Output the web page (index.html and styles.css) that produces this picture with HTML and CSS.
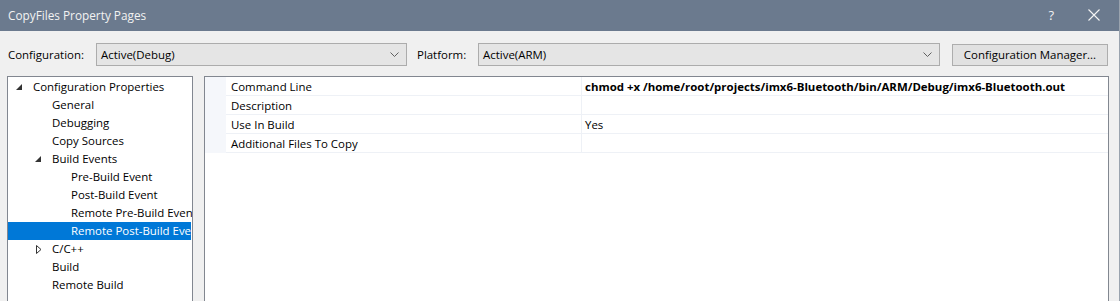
FILE: index.html
```html
<!DOCTYPE html>
<html>
<head>
<meta charset="utf-8">
<link rel="stylesheet" href="styles.css">
</head>
<body>
<div class="window">
  <div class="titlebar">
    <span class="title">CopyFiles Property Pages</span>
    <span class="tb-btns">
      <span class="help">?</span>
      <svg class="close" width="12" height="12" viewBox="0 0 12 12"><path d="M0.5 0.5L11.5 11.5M11.5 0.5L0.5 11.5" stroke="#f4f4f4" stroke-width="1.1" fill="none"/></svg>
    </span>
  </div>
  <div class="toolbar">
    <span class="lbl lbl-config">Configuration:</span>
    <div class="select sel-config"><span>Active(Debug)</span><svg class="chev" width="9" height="5" viewBox="0 0 9 5"><path d="M0.5 0.5L4.5 4.5L8.5 0.5" stroke="#606060" fill="none"/></svg></div>
    <span class="lbl lbl-plat">Platform:</span>
    <div class="select sel-plat"><span>Active(ARM)</span><svg class="chev" width="9" height="5" viewBox="0 0 9 5"><path d="M0.5 0.5L4.5 4.5L8.5 0.5" stroke="#606060" fill="none"/></svg></div>
    <div class="button">Configuration Manager...</div>
  </div>
  <div class="main">
    <div class="tree">
      <div class="row l0"><svg class="exp" width="7" height="7" viewBox="0 0 7 7"><path d="M6 0L6 6L0 6Z" fill="#333"/></svg>Configuration Properties</div>
      <div class="row l1">General</div>
      <div class="row l1">Debugging</div>
      <div class="row l1">Copy Sources</div>
      <div class="row l1"><svg class="exp" width="7" height="7" viewBox="0 0 7 7"><path d="M6 0L6 6L0 6Z" fill="#333"/></svg>Build Events</div>
      <div class="row l2">Pre-Build Event</div>
      <div class="row l2">Post-Build Event</div>
      <div class="row l2">Remote Pre-Build Event</div>
      <div class="row l2 sel">Remote Post-Build Event</div>
      <div class="row l1"><svg class="col" width="6" height="9" viewBox="0 0 6 9"><path d="M0.5 0.5L5 4.5L0.5 8.5Z" stroke="#333" fill="none"/></svg>C/C++</div>
      <div class="row l1">Build</div>
      <div class="row l1">Remote Build</div>
      <div class="row l1"></div>
    </div>
    <div class="grid">
      <div class="prow"><div class="gut"></div><div class="name">Command Line</div><div class="val bold">chmod +x /home/root/projects/imx6-Bluetooth/bin/ARM/Debug/imx6-Bluetooth.out</div></div>
      <div class="prow"><div class="gut"></div><div class="name">Description</div><div class="val"></div></div>
      <div class="prow"><div class="gut"></div><div class="name">Use In Build</div><div class="val">Yes</div></div>
      <div class="prow"><div class="gut"></div><div class="name">Additional Files To Copy</div><div class="val"></div></div>
    </div>
  </div>
</div>
</body>
</html>
```
FILE: styles.css
```css
* { box-sizing: border-box; }
html, body { margin: 0; padding: 0; }
body {
  width: 1120px;
  height: 301px;
  overflow: hidden;
  background: #f0f0f0;
  font-family: "Open Sans", "Noto Sans", sans-serif;
  font-size: 11.45px;
  color: #000;
}
.window {
  height: 301px;
  border-right: 1px solid #9aa3ae;
}
.titlebar {
  height: 31px;
  background: #6b7a8e;
  color: #f2f2f2;
  display: flex;
  align-items: center;
  justify-content: space-between;
  padding-left: 8px;
  padding-bottom: 1px;
  font-size: 11.8px;
}
.tb-btns {
  display: flex;
  align-items: center;
}
.help {
  font-size: 13px;
  margin-right: 34px;
}
.close { margin-right: 19px; }
.toolbar {
  display: flex;
  align-items: center;
  height: 23px;
  margin-top: 12px;
  padding-left: 8px;
}
.lbl { line-height: 23px; }
.lbl-config { width: 88px; }
.lbl-plat { width: 61px; margin-left: 10px; }
.select {
  height: 23px;
  background: #e5e5e5;
  border: 1px solid #acacac;
  display: flex;
  align-items: center;
  justify-content: space-between;
  padding: 0 7px 0 4px;
}
.sel-config { width: 311px; }
.sel-plat { width: 462px; }
.button {
  margin-left: 12px;
  width: 156px;
  height: 22px;
  background: #e1e1e1;
  border: 1px solid #adadad;
  display: flex;
  align-items: center;
  justify-content: center;
}
.main {
  display: flex;
  margin-top: 10px;
  padding-left: 7px;
  gap: 11px;
}
.tree {
  width: 186px;
  height: 240px;
  background: #fff;
  border: 1px solid #828790;
  padding-top: 1px;
  overflow: hidden;
}
.row {
  height: 18px;
  line-height: 18px;
  white-space: nowrap;
  overflow: hidden;
  position: relative;
}
.l0 { padding-left: 25px; }
.l1 { padding-left: 44px; }
.l2 { padding-left: 63px; }
.row.sel { background: #0078d7; color: #fff; margin-right: 1px; }
.exp {
  position: absolute;
  top: 6px;
}
.l0 .exp { left: 8px; }
.l1 .exp { left: 27px; }
.col {
  position: absolute;
  left: 28px;
  top: 5px;
}
.grid {
  width: 905px;
  height: 240px;
  background: #fff;
  border: 1px solid #828790;
}
.prow {
  display: flex;
  height: 19px;
  line-height: 20px;
}
.gut {
  width: 21px;
  background: #f5f7fb;
  border-bottom: 1px solid #f5f7fb;
}
.name {
  width: 356px;
  padding-left: 5px;
  border-bottom: 1px solid #eef1f6;
  border-right: 1px solid #eef1f6;
}
.val {
  flex: 1;
  padding-left: 3px;
  border-bottom: 1px solid #eef1f6;
  white-space: nowrap;
}
.bold { font-weight: bold; }
```
